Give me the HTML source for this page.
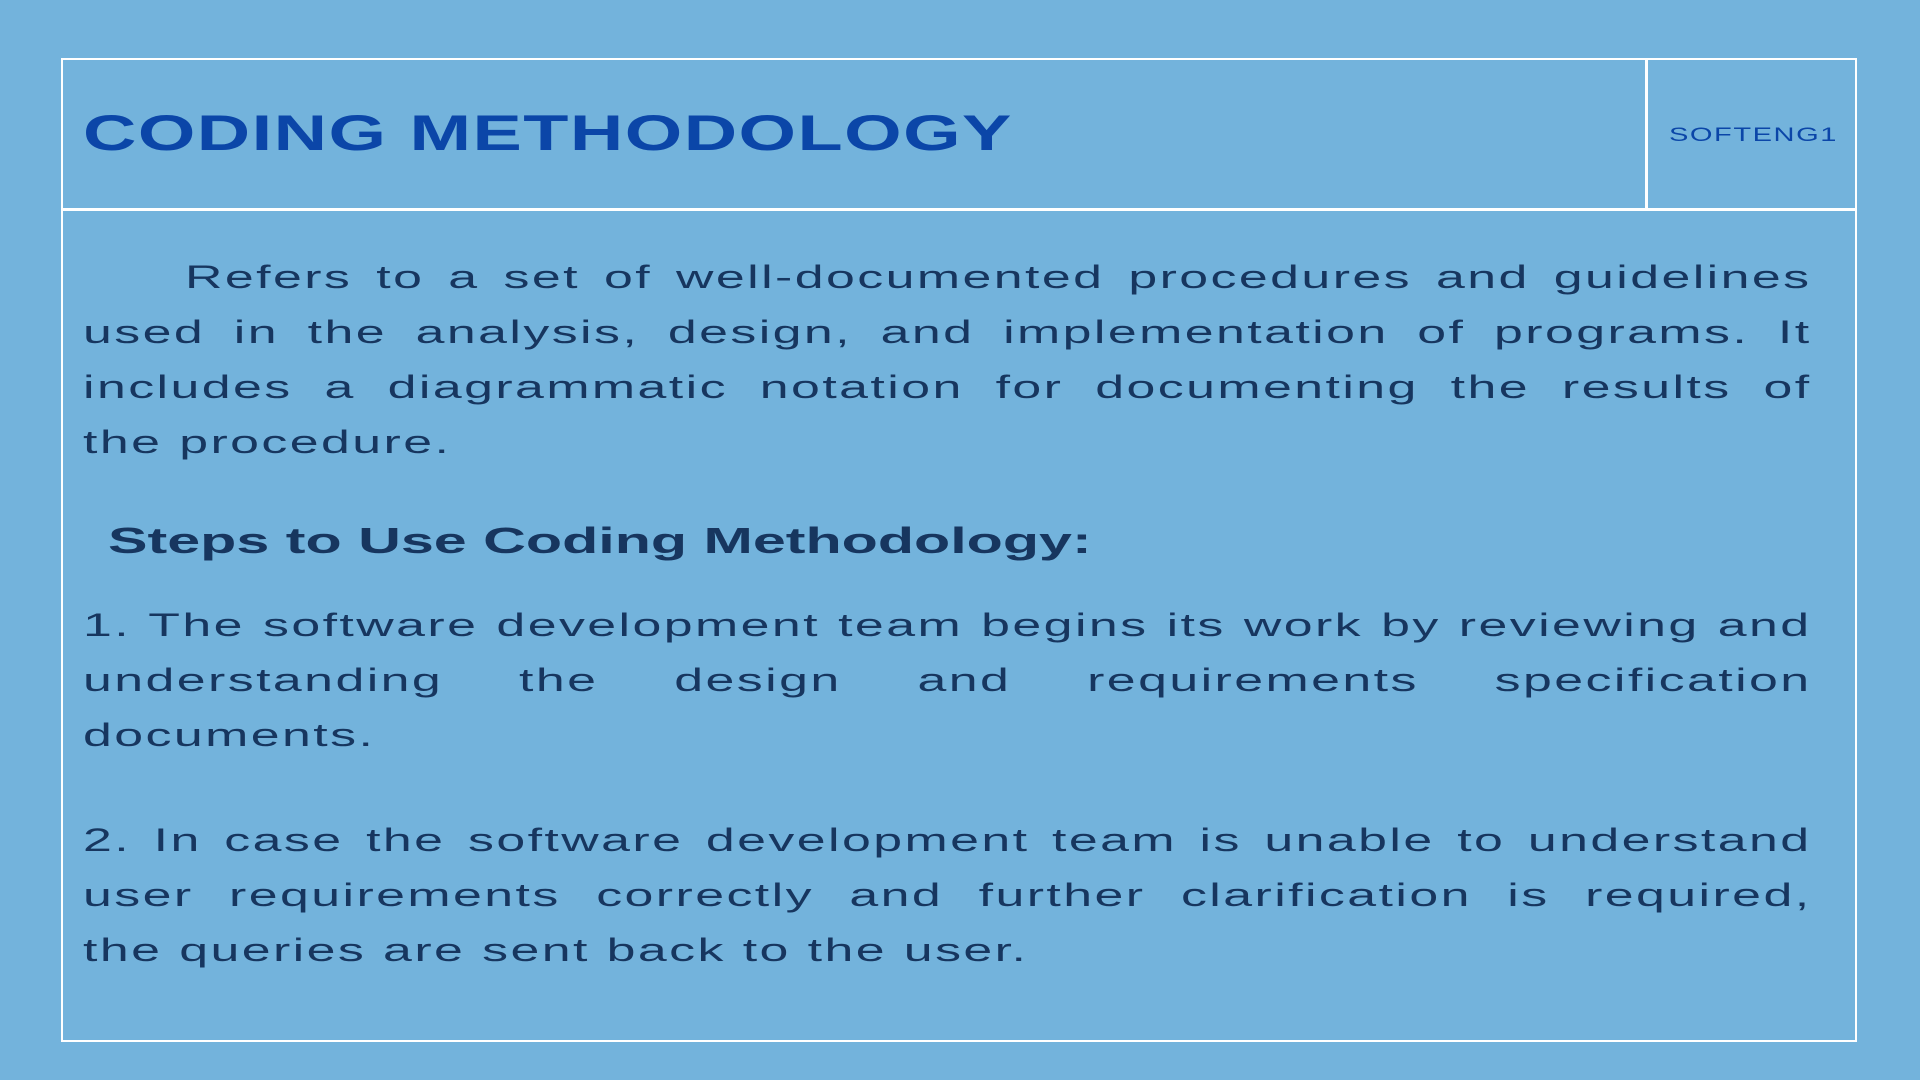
<!DOCTYPE html>
<html><head><meta charset="utf-8"><style>
html,body{margin:0;padding:0}
body{width:1920px;height:1080px;background:#73b3dc;position:relative;overflow:hidden;font-family:"Liberation Sans",sans-serif;}
.box{position:absolute;left:61px;top:58px;width:1796px;height:984px;border:2px solid #fff;box-sizing:border-box}
.hline{position:absolute;left:61px;top:208px;width:1796px;height:3px;background:#fff}
.vline{position:absolute;left:1645px;top:58px;width:3px;height:151px;background:#fff}
.title{position:absolute;left:83px;top:104px;font-size:50px;font-weight:bold;color:#0b46a8;white-space:nowrap;transform:scaleX(1.478);transform-origin:left top;letter-spacing:1px}
.tag{position:absolute;left:1669px;top:125px;font-size:19px;color:#0b46a8;white-space:nowrap;transform:scaleX(1.53);transform-origin:left top;letter-spacing:1px}
.l{position:absolute;left:83px;width:1067px;font-size:32px;color:#17365f;letter-spacing:1.5px;text-align:justify;text-align-last:justify;white-space:nowrap;line-height:40px;transform:scaleX(1.62);transform-origin:left top}
.nj{text-align-last:left}
.h{position:absolute;left:108px;top:520px;font-size:36px;font-weight:bold;color:#17365f;white-space:nowrap;transform:scaleX(1.645);transform-origin:left top}
</style></head><body>
<div class="box"></div><div class="hline"></div><div class="vline"></div>
<div class="title">CODING METHODOLOGY</div>
<div class="tag">SOFTENG1</div>
<div class="l" style="top:257px;left:185px;width:1004px">Refers to a set of well-documented procedures and guidelines</div>
<div class="l" style="top:312px">used in the analysis, design, and implementation of programs. It</div>
<div class="l" style="top:367px">includes a diagrammatic notation for documenting the results of</div>
<div class="l nj" style="top:422px">the procedure.</div>
<div class="h">Steps to Use Coding Methodology:</div>
<div class="l" style="top:605px">1. The software development team begins its work by reviewing and</div>
<div class="l" style="top:660px">understanding the design and requirements specification</div>
<div class="l nj" style="top:715px">documents.</div>
<div class="l" style="top:820px">2. In case the software development team is unable to understand</div>
<div class="l" style="top:875px">user requirements correctly and further clarification is required,</div>
<div class="l nj" style="top:930px">the queries are sent back to the user.</div>
</body></html>
